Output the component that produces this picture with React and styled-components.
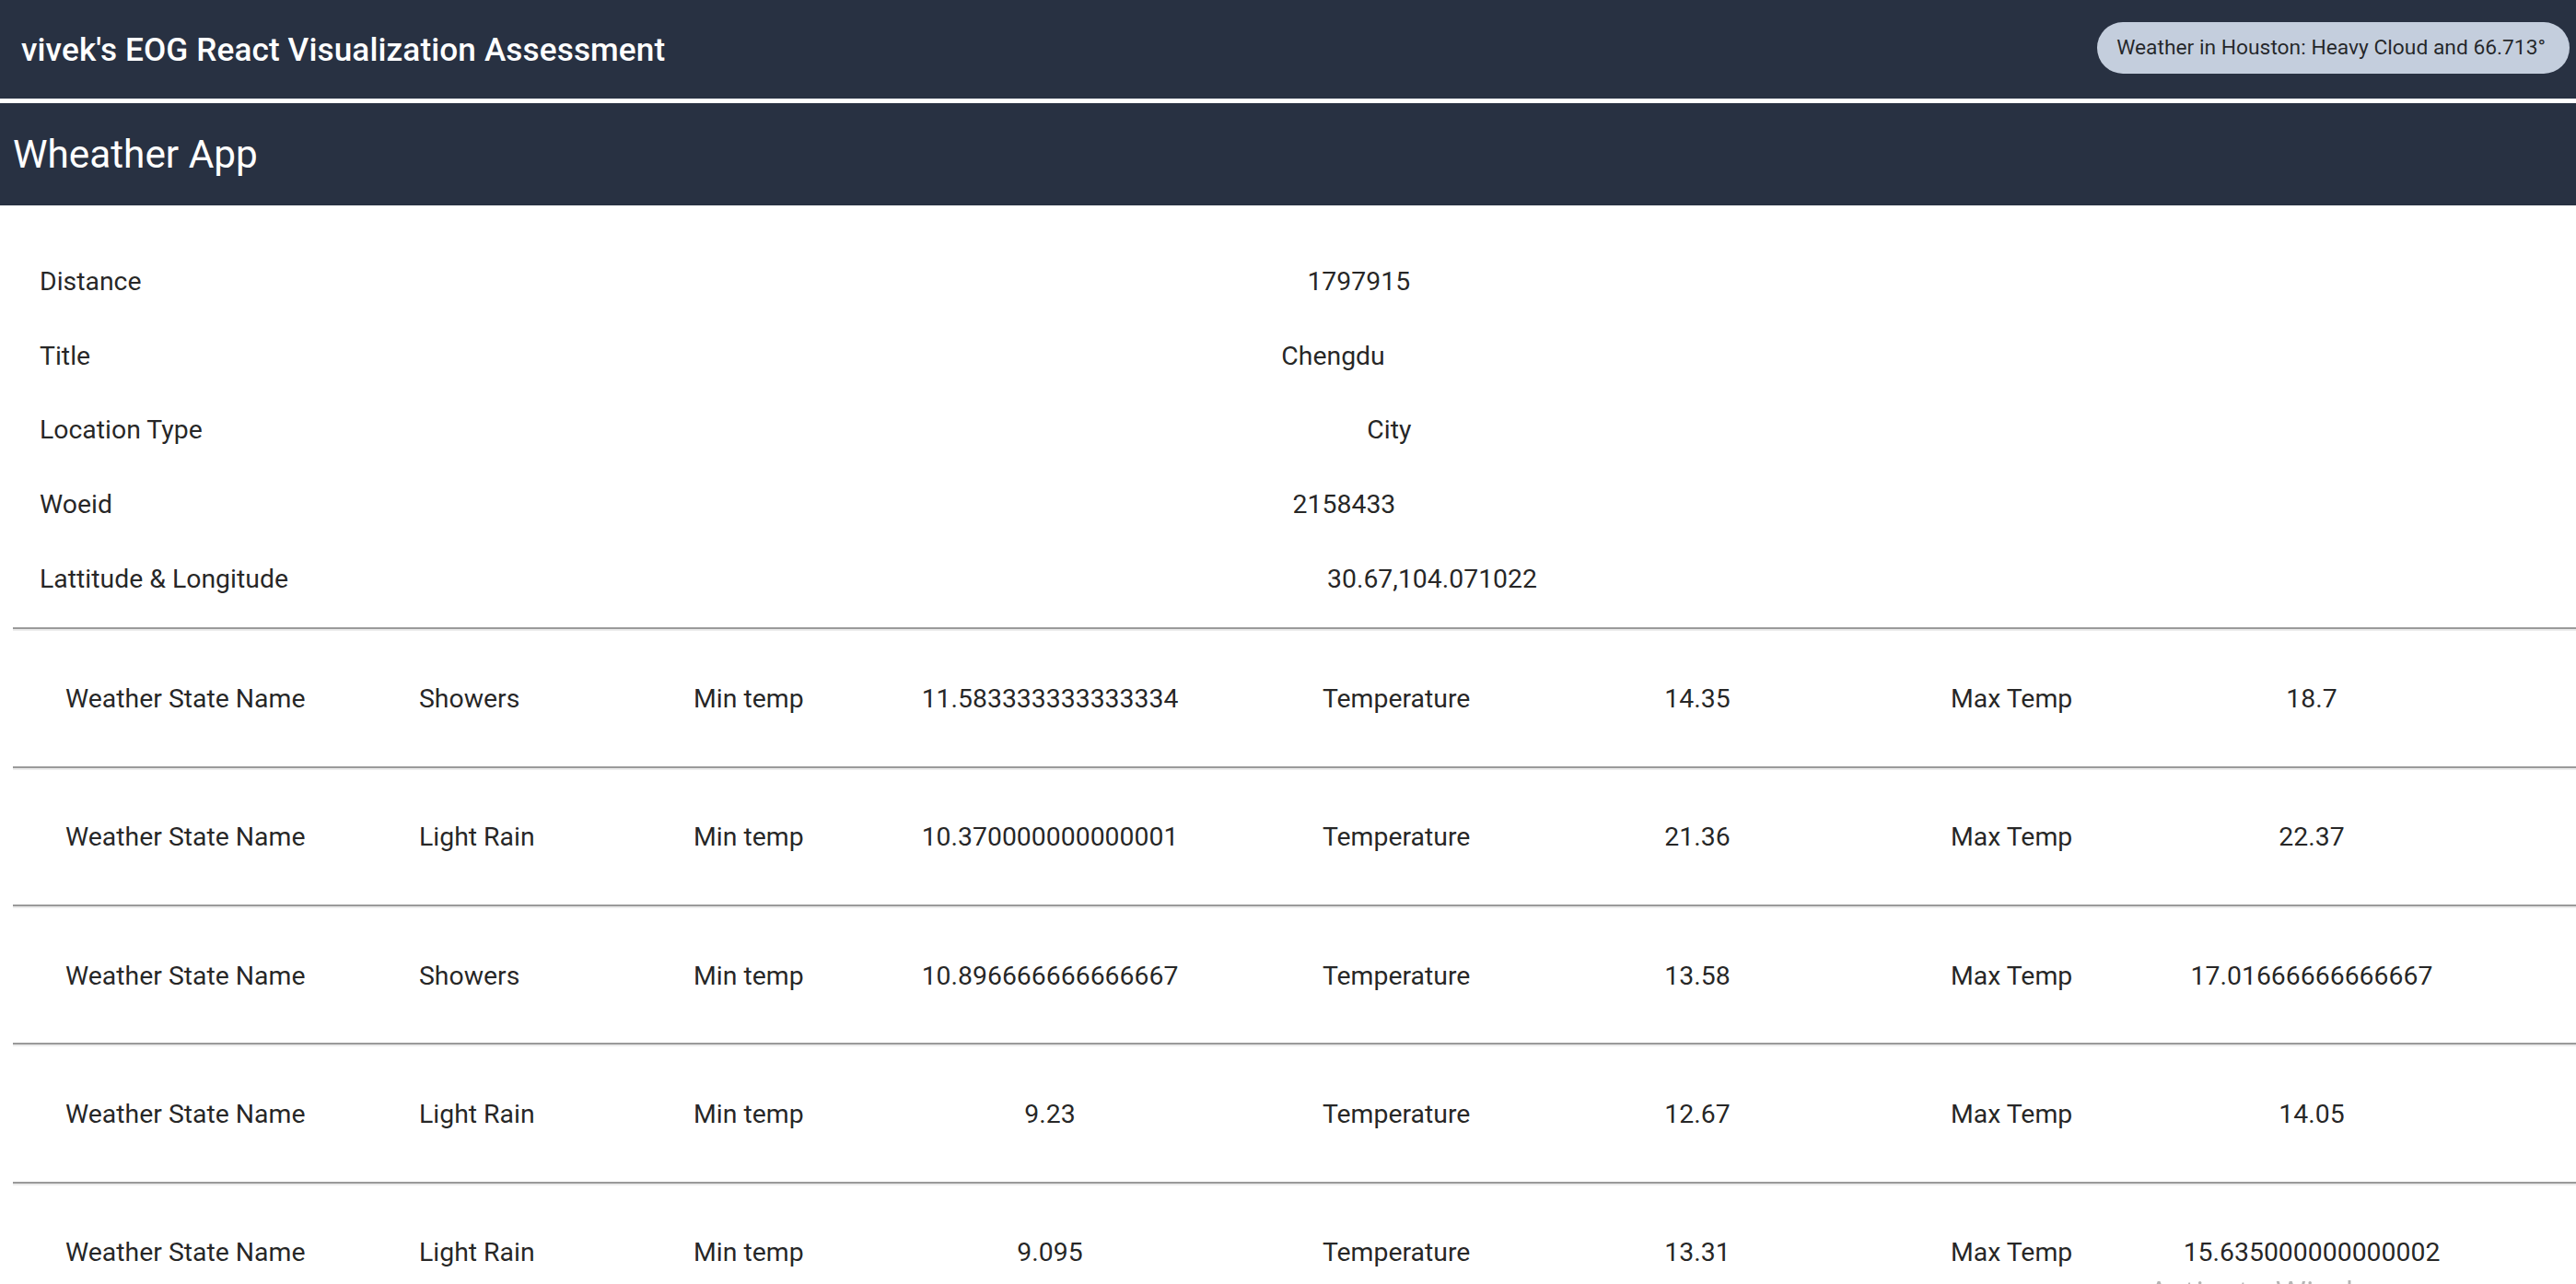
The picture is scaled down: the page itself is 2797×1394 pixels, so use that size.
import React from "react";
import styled, { createGlobalStyle } from "styled-components";

const GlobalStyle = createGlobalStyle`
  html, body {
    margin: 0;
    padding: 0;
    overflow: hidden;
    background: #ffffff;
    font-family: Roboto, "Liberation Sans", Arial, sans-serif;
  }
  * { box-sizing: border-box; }
`;

const Page = styled.div`
  width: 2797px;
  min-height: 1394px;
  display: flex;
  flex-direction: column;
  color: rgba(0, 0, 0, 0.87);
`;

const TopBar = styled.header`
  height: 107px;
  background: #283142;
  display: flex;
  align-items: center;
  justify-content: space-between;
  padding: 0 7px 0 23px;
`;

const AppTitle = styled.h1`
  margin: 0;
  font-size: 35.2px;
  font-weight: 500;
  color: #ffffff;
  letter-spacing: 0.1px;
`;

const Chip = styled.div`
  height: 56px;
  border-radius: 28px;
  background: #c4cedd;
  color: rgba(0, 0, 0, 0.82);
  display: flex;
  align-items: center;
  padding: 0 26px 0 21px;
  font-size: 22.8px;
  margin-top: -4px;
  white-space: nowrap;
`;

const SubBar = styled.div`
  margin-top: 5px;
  height: 111px;
  background: #283142;
  display: flex;
  align-items: center;
  padding-left: 14px;
`;

const SubTitle = styled.h2`
  margin: 0;
  font-size: 42.3px;
  font-weight: 400;
  color: #ffffff;
`;

const InfoList = styled.section`
  padding-top: 42px;
  display: flex;
  flex-direction: column;
`;

const InfoRow = styled.div`
  height: 80.7px;
  display: flex;
  align-items: center;
  padding-left: 43px;
  font-size: 28.4px;
`;

const InfoLabel = styled.span`
  white-space: nowrap;
`;

const InfoValue = styled.span`
  flex: 1;
  text-align: center;
`;

const WeatherList = styled.section`
  padding-left: 14px;
  display: flex;
  flex-direction: column;
`;

const Rule = styled.hr`
  margin: 13px 0;
  height: 0;
  border: none;
  border-top: 2px solid #9a9a9a;
  border-bottom: 2px solid #ececec;
`;

const WeatherRow = styled.div`
  height: 120.3px;
  display: grid;
  grid-template-columns: 682px 683px 682px auto;
  align-items: center;
  padding-left: 57px;
  font-size: 28.4px;
`;

const Pair = styled.div`
  display: grid;
  grid-template-columns: ${(p) => p.$labelW}px ${(p) => p.$valueW}px;
  align-items: center;
`;

const PairLabel = styled.span`
  white-space: nowrap;
`;

const PairValue = styled.span`
  white-space: nowrap;
  text-align: ${(p) => p.$align};
`;

const Watermark = styled.div`
  position: fixed;
  left: 2333px;
  top: 1385px;
  font-family: "Open Sans", "Noto Sans", sans-serif;
  font-size: 35px;
  line-height: 1;
  color: rgba(150, 150, 150, 0.7);
  pointer-events: none;
  white-space: nowrap;
`;

const info = [
  ["Distance", "1797915"],
  ["Title", "Chengdu"],
  ["Location Type", "City"],
  ["Woeid", "2158433"],
  ["Lattitude & Longitude", "30.67,104.071022"],
];

const pairs = [
  { label: "Weather State Name", key: "state", labelW: 384, valueW: 298, align: "left" },
  { label: "Min temp", key: "min", labelW: 237, valueW: 300, align: "center" },
  { label: "Temperature", key: "temp", labelW: 257, valueW: 300, align: "center" },
  { label: "Max Temp", key: "max", labelW: 242, valueW: 300, align: "center" },
];

const days = [
  { state: "Showers", min: "11.583333333333334", temp: "14.35", max: "18.7" },
  { state: "Light Rain", min: "10.370000000000001", temp: "21.36", max: "22.37" },
  { state: "Showers", min: "10.896666666666667", temp: "13.58", max: "17.01666666666667" },
  { state: "Light Rain", min: "9.23", temp: "12.67", max: "14.05" },
  { state: "Light Rain", min: "9.095", temp: "13.31", max: "15.635000000000002" },
];

export default function App() {
  return (
    <>
      <GlobalStyle />
      <Page>
        <TopBar>
          <AppTitle>vivek's EOG React Visualization Assessment</AppTitle>
          <Chip>Weather in Houston: Heavy Cloud and 66.713°</Chip>
        </TopBar>
        <SubBar>
          <SubTitle>Wheather App</SubTitle>
        </SubBar>
        <InfoList>
          {info.map(([label, value]) => (
            <InfoRow key={label}>
              <InfoLabel>{label}</InfoLabel>
              <InfoValue>{value}</InfoValue>
            </InfoRow>
          ))}
        </InfoList>
        <WeatherList>
          {days.map((d, i) => (
            <React.Fragment key={i}>
              <Rule />
              <WeatherRow>
                {pairs.map((p) => (
                  <Pair key={p.key} $labelW={p.labelW} $valueW={p.valueW}>
                    <PairLabel>{p.label}</PairLabel>
                    <PairValue $align={p.align}>{d[p.key]}</PairValue>
                  </Pair>
                ))}
              </WeatherRow>
            </React.Fragment>
          ))}
        </WeatherList>
      </Page>
      <Watermark>Activate Windows</Watermark>
    </>
  );
}
